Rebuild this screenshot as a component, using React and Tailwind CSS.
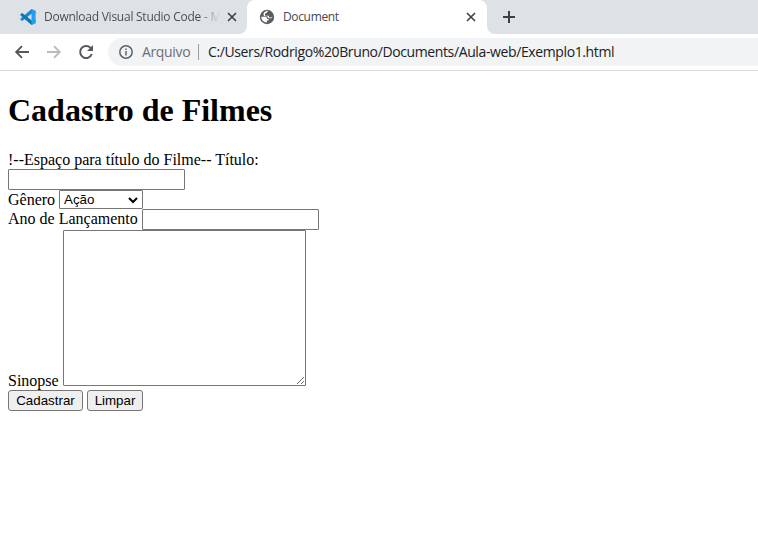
import React from "react";

function VsCodeIcon() {
  return (
    <svg className="h-4 w-4 shrink-0" viewBox="0 0 16 16">
      <path d="M11.500 0 15.500 2v3L11.500 4.800 2.200 12 .4 10.700v-1z" fill="#1689d3" />
      <path d="M.4 5.300 2.200 4l9.300 7.200 4-.4V14l-4 2L.4 6.300z" fill="#0b76bd" />
      <path d="M11.500 0 15.600 1.900v12.200L11.500 16z" fill="#25a0ec" />
    </svg>
  );
}

function GlobeIcon() {
  return (
    <svg className="h-4 w-4 shrink-0" viewBox="0 0 16 16">
      <circle cx="8" cy="8" r="7.200" fill="#5a5e63" />
      <path d="M9.2 2.2c-1 .3-1.5.9-1.5 1.9-1.2 0-1.8.5-1.8 1.6 0 .7.5 1.1 1.3 1.1h1.7c.9 0 1.2.5 1.2 1.2v.6h1.7c.7 0 1.1-.3 1.4-.8l.3-.1c-.2.900-.800 1.500-1.700 1.500H9.800c-.7 0-1.100-.4-1.100-1.100 0-.5-.3-.8-.8-.8H6.400c-1.100 0-1.900-.8-1.900-1.900 0-1.500.9-2.600 2.300-2.900.5-.8 1.300-1.200 2.400-.3z" fill="#fff" />
      <path d="M2.300 7.800h3.500c1.500 0 2.500 1 2.500 2.300h1.200v1.500H7.900v1.900c-3.200 0-5.700-2.600-5.600-5.700z" fill="#fff" />
    </svg>
  );
}

function CloseIcon() {
  return (
    <svg className="h-4 w-4 shrink-0" viewBox="0 0 16 16" fill="none" stroke="#3c4043" strokeWidth="1.6">
      <path d="m4 4 8 8M12 4l-8 8" />
    </svg>
  );
}

function TabStrip() {
  return (
    <div className="flex h-[34px] bg-[#dee1e6] font-['Open_Sans','Noto_Sans',sans-serif] text-[12px] text-[#45494d]">
      <div className="flex w-[239px] items-center pl-5">
        <VsCodeIcon />
        <div className="ml-2 w-[176px] shrink-0 whitespace-nowrap bg-linear-to-r from-[#45494d] from-88% to-transparent bg-clip-text tracking-[-0.25px] text-transparent">
          Download Visual Studio Code - M
        </div>
        <div className="ml-1"><CloseIcon /></div>
      </div>
      <div className="flex h-[34px] w-2 items-end bg-white">
        <div className="h-[34px] w-2 rounded-br-lg bg-[#dee1e6]" />
      </div>
      <div className="flex w-[240px] items-center rounded-t-lg bg-white pl-3">
        <GlobeIcon />
        <div className="ml-2 w-[180px] tracking-[-0.35px]">Document</div>
        <CloseIcon />
      </div>
      <div className="w-2 bg-white"><div className="h-[34px] w-2 rounded-bl-lg bg-[#dee1e6]" /></div>
      <svg className="ml-[6px] mt-[9px] h-4 w-4" viewBox="0 0 16 16" stroke="#3c4043" strokeWidth="2">
        <path d="M8 2v12M2 8h12" />
      </svg>
    </div>
  );
}

function Toolbar() {
  return (
    <div className="flex h-[37px] items-center border-b border-[#d8dadd] bg-white pl-[14px] font-['Open_Sans','Noto_Sans',sans-serif] text-[14px]">
      <svg className="h-4 w-4" viewBox="0 0 16 16" fill="none" stroke="#55595e" strokeWidth="1.9">
        <path d="M15 8H2.200M8 2.200 2.200 8 8 13.800" />
      </svg>
      <svg className="ml-4 h-4 w-4" viewBox="0 0 16 16" fill="none" stroke="#babcbe" strokeWidth="1.9">
        <path d="M1 8h12.800M8 2.200 13.800 8 8 13.800" />
      </svg>
      <svg className="ml-4 h-4 w-4" viewBox="0 0 16 16" fill="none">
        <path d="M13.800 10A6 6 0 1 1 12.400 3.800L14 5.400" stroke="#55595e" strokeWidth="2" />
        <path d="M15 1v6H9z" fill="#55595e" />
      </svg>
      <div className="ml-[14px] flex h-7 flex-1 items-center rounded-l-full bg-[#f1f3f4] pl-[11px]">
        <svg className="h-[14px] w-[14px]" viewBox="0 0 14 14" fill="none" stroke="#5f6368" strokeWidth="1.5">
          <circle cx="7" cy="7" r="6.200" />
          <path d="M7 6v4.500M7 3.500v1.500" />
        </svg>
        <span className="ml-[9px] w-[56px] pb-px tracking-[-0.35px] text-[#6b6f74]">Arquivo</span>
        <span className="h-4 w-px bg-[#9a9da1]" />
        <span className="ml-[9px] whitespace-nowrap pb-px tracking-[-0.38px] text-[#202124]">C:/Users/Rodrigo%20Bruno/Documents/Aula-web/Exemplo1.html</span>
      </div>
    </div>
  );
}

const fieldClass = "block h-[21px] w-[177px] rounded-[1px] border border-[#767676] bg-white px-0.5 font-['Liberation_Sans',sans-serif] text-[13.333px] outline-none";
const buttonClass = "flex h-[21px] items-center justify-center rounded-[3px] border border-[#767676] bg-[#efefef] font-['Liberation_Sans',sans-serif] text-[13.333px] text-black";

export default function App() {
  return (
    <div className="h-[543px] w-[758px] overflow-hidden bg-white">
      <TabStrip />
      <Toolbar />
      <main className="px-2 pt-[21px] font-['Liberation_Serif',serif] text-[16px] leading-[18px] text-black">
        <h1 className="h-[37px] text-[32px] font-bold leading-[37px]">Cadastro de Filmes</h1>
        <form className="mt-[22px]" onSubmit={(e) => e.preventDefault()}>
          <label htmlFor="titulo" className="block h-[18px]">!--Espaço para título do Filme-- Título:</label>
          <input id="titulo" className={fieldClass} />
          <div className="flex h-[19px]">
            <label htmlFor="genero" className="w-[51px] whitespace-nowrap leading-[20px]">Gênero</label>
            <button id="genero" type="button" className="flex h-[19px] w-[84px] items-center justify-between rounded-[1px] border border-[#767676] pl-1 pr-1 font-['Liberation_Sans',sans-serif] text-[13.333px] leading-[17px]">
              <span>Ação</span>
              <svg className="h-[10px] w-[10px]" viewBox="0 0 10 10" fill="none" stroke="#000" strokeWidth="2">
                <path d="m1 3 4 4 4-4" />
              </svg>
            </button>
          </div>
          <div className="flex h-[21px]">
            <label htmlFor="ano" className="w-[134px] whitespace-nowrap leading-[20px]">Ano de Lançamento</label>
            <input id="ano" className={fieldClass} />
          </div>
          <div className="flex h-[160px]">
            <label htmlFor="sinopse" className="w-[55px] pt-[142px]">Sinopse</label>
            <textarea id="sinopse" className="block h-[156px] w-[243px] resize rounded-[1px] border border-[#767676] bg-white p-0.5 outline-none" />
          </div>
          <div className="flex gap-1">
            <button className={buttonClass + " w-[75px]"}>Cadastrar</button>
            <button className={buttonClass + " w-[56px]"}>Limpar</button>
          </div>
        </form>
      </main>
    </div>
  );
}
